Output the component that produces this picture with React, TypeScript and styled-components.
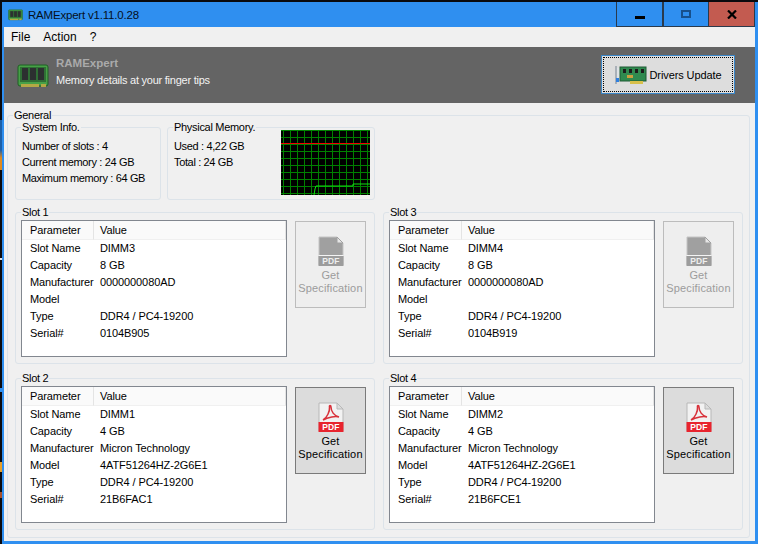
import React, { FC } from 'react';
import styled, { createGlobalStyle } from 'styled-components';

const GlobalStyle = createGlobalStyle`
  html, body {
    margin: 0;
    padding: 0;
    width: 758px;
    height: 544px;
    overflow: hidden;
    background: #0a0a0e;
  }
  * { box-sizing: border-box; }
`;

const uiFont = `'Liberation Sans', Arial, sans-serif`;

const Screen = styled.div`
  display: flex;
  width: 758px;
  height: 544px;
  padding-top: 2px;
  background: #0a0a0e;
`;

const DesktopEdge = styled.div`
  width: 2px;
  margin-top: -2px;
  flex: none;
  background: linear-gradient(
    to bottom,
    #0a0a0e 0 120px,
    #1c5fa8 120px 150px,
    #e08a1e 158px 170px,
    #0a0a0e 170px 258px,
    #e6e6e6 258px 260px,
    #0a0a0e 260px 388px,
    #2f8ff0 388px 392px,
    #0a0a0e 392px 462px,
    #e9a028 462px 472px,
    #0a0a0e 472px 492px,
    #a8502a 492px 498px,
    #0a0a0e 498px
  );
`;

const Window = styled.div`
  display: flex;
  flex-direction: column;
  width: 756px;
  height: 542px;
  border-left: 2px solid #2f8ff0;
  border-right: 3px solid #2f8ff0;
  border-bottom: 3px solid #2f8ff0;
  background: #f0f0f0;
  font-family: ${uiFont};
  font-size: 11px;
  color: #000;
`;

const TitleBar = styled.div`
  display: flex;
  align-items: center;
  height: 25px;
  flex: none;
  background: #2f8ff0;
`;

const TitleIcon = styled.svg`
  width: 15px;
  height: 12px;
  margin: 0 5px 0 4px;
  flex: none;
`;

const TitleText = styled.div`
  flex: 1;
  font-size: 11.5px;
  letter-spacing: -0.2px;
  color: #05101c;
`;

const TitleButton = styled.div<{ $close?: boolean; $width: number }>`
  display: flex;
  align-items: center;
  justify-content: center;
  width: ${(p) => p.$width}px;
  height: 25px;
  border: 1px solid #2a3a4c;
  border-top: 0;
  border-left-width: ${(p) => (p.$close ? 0 : 1)}px;
  background: ${(p) => (p.$close ? '#c35b50' : '#2f8ff0')};
`;

const MinGlyph = styled.div`
  width: 10px;
  height: 3px;
  margin-top: 6px;
  background: #000;
`;

const MaxGlyph = styled.div`
  width: 10px;
  height: 8px;
  border: 2px solid #17508c;
`;

const MenuBar = styled.div`
  display: flex;
  align-items: center;
  gap: 13px;
  height: 20px;
  padding-left: 7px;
  flex: none;
  background: #f0f0f0;
  font-size: 12px;
`;

const Banner = styled.div`
  display: flex;
  align-items: center;
  height: 56px;
  padding: 0 20px 0 13px;
  flex: none;
  background: #646464;
`;

const BannerIcon = styled.svg`
  width: 32px;
  height: 24px;
  margin-right: 7px;
  margin-top: 1px;
  flex: none;
`;

const BannerText = styled.div`
  flex: 1;
  display: flex;
  flex-direction: column;
  gap: 3px;
  padding-bottom: 8px;
  line-height: 14px;
`;

const BannerName = styled.div`
  font-weight: 700;
  font-size: 11.5px;
  color: #aaaaaa;
`;

const BannerTagline = styled.div`
  letter-spacing: -0.24px;
  color: #f2f2f2;
`;

const UpdateButton = styled.button`
  display: flex;
  align-items: center;
  justify-content: center;
  gap: 3px;
  width: 134px;
  height: 39px;
  margin-top: -1px;
  padding: 0;
  border: 1px solid #3a86c8;
  outline: 1px dotted #000;
  outline-offset: -3px;
  background: #dddddd;
  font-family: ${uiFont};
  font-size: 11px;
  letter-spacing: -0.1px;
  color: #000;
`;

const CardIcon = styled.svg`
  width: 32px;
  height: 20px;
  flex: none;
`;

const Body = styled.div`
  flex: 1;
  padding: 5px 5px 0 3px;
`;

const Group = styled.fieldset<{ $width?: number; $height?: number }>`
  margin: 0;
  padding: 0;
  min-width: 0;
  width: ${(p) => (p.$width ? `${p.$width}px` : 'auto')};
  height: ${(p) => (p.$height ? `${p.$height}px` : 'auto')};
  border: 1px solid #dce3e9;
  border-radius: 3px;
`;

const GroupLabel = styled.legend`
  margin-left: 5px;
  padding: 0 1px;
  height: 14px;
  line-height: 14px;
  font-size: 11px;
  letter-spacing: -0.3px;
`;

const GeneralInner = styled.div`
  padding-left: 7px;
`;

const TopRow = styled.div`
  display: flex;
  gap: 6px;
  margin-top: -2px;
`;

const InfoColumn = styled.div`
  display: flex;
  flex-direction: column;
  padding: 4px 0 0 6px;
  line-height: 16px;
  letter-spacing: -0.35px;
  white-space: nowrap;
`;

const MemoryBody = styled.div`
  display: flex;
  justify-content: space-between;
  padding-right: 4px;
`;

const Chart = styled.svg`
  width: 89px;
  height: 65px;
  margin-top: -4px;
  flex: none;
`;

const SlotGrid = styled.div`
  display: grid;
  grid-template-columns: 360px 360px;
  column-gap: 8px;
  row-gap: 7px;
  margin-top: 5px;
`;

const SlotBody = styled.div`
  display: flex;
  align-items: flex-start;
  gap: 8px;
  padding: 1px 0 0 5px;
`;

const TableFrame = styled.div`
  width: 266px;
  height: 137px;
  border: 1px solid #82878f;
  background: #fff;
`;

const ParamTable = styled.table`
  width: 264px;
  border-collapse: separate;
  border-spacing: 0;
  table-layout: fixed;
  letter-spacing: -0.1px;
`;

const HeadCell = styled.th<{ $width: number; $inset: number }>`
  width: ${(p) => p.$width}px;
  height: 19px;
  padding: 0 0 0 ${(p) => p.$inset}px;
  background: #fafafa;
  border-right: 1px solid #e4e4e4;
  border-bottom: 1px solid #f0f0f0;
  font-weight: 400;
  text-align: left;
  line-height: 17px;
`;

const Cell = styled.td<{ $inset: number }>`
  height: 17px;
  padding: 0 0 0 ${(p) => p.$inset}px;
  white-space: nowrap;
  line-height: 17px;
`;

const SpecButton = styled.button<{ $enabled: boolean }>`
  display: flex;
  flex-direction: column;
  align-items: center;
  width: 71px;
  height: 87px;
  margin-top: 1px;
  padding: 14px 0 0;
  border: 1px solid ${(p) => (p.$enabled ? '#7a7a7a' : '#bcbcbc')};
  background: ${(p) => (p.$enabled ? '#dcdcdc' : '#eeeeee')};
  color: ${(p) => (p.$enabled ? '#000' : '#9c9c9c')};
  font-family: ${uiFont};
  font-size: 11px;
  letter-spacing: 0.15px;
  line-height: 13px;
`;

const PdfIcon = styled.svg`
  width: 26px;
  height: 30px;
  margin-bottom: 3px;
  flex: none;
`;

const RamGlyph: FC = () => (
  <>
    <rect x="1" y="1" width="30" height="21" rx="2" fill="#47a047" stroke="#1f5f24" />
    <rect x="3" y="3" width="26" height="15" fill="#2f6f35" />
    <rect x="5" y="4" width="6" height="12" fill="#2c3030" />
    <rect x="13" y="4" width="6" height="12" fill="#2c3030" />
    <rect x="21" y="4" width="6" height="12" fill="#2c3030" />
    <rect x="4" y="20" width="18" height="3" fill="#b4a844" />
    <rect x="24" y="20" width="5" height="3" fill="#b4a844" />
  </>
);

const PdfGlyph: FC<{ enabled: boolean }> = ({ enabled }) => (
  <PdfIcon viewBox="0 0 26 30">
    {enabled ? (
      <>
        <path d="M1 1 H19 L25 7 V29 H1 Z" fill="#f2f2f2" stroke="#b8b8b8" />
        <path d="M19 1 V7 H25 Z" fill="#dcdcdc" stroke="#b8b8b8" />
        <path
          d="M5 18 C9 16 12 9 11.5 5 C11 3 13 3 13 5 C13 9 16 14 21 15 C18 14 10 15 5 18 Z"
          fill="none"
          stroke="#d8313a"
          strokeWidth="1.5"
        />
        <rect x="0.5" y="20" width="25" height="10" fill="#e8242e" />
        <text x="13" y="28.2" textAnchor="middle" fontSize="8.5" fontWeight="700" fill="#fff" fontFamily="Liberation Sans, sans-serif">
          PDF
        </text>
      </>
    ) : (
      <>
        <path d="M1 1 H19 L25 7 V29 H1 Z" fill="#a0a0a0" stroke="#c4c4c4" />
        <path d="M19 1 V7 H25 Z" fill="#e6e6e6" stroke="#a0a0a0" />
        <rect x="0.5" y="19" width="25" height="1" fill="#f4f4f4" />
        <rect x="0.5" y="20" width="25" height="10" fill="#9c9c9c" />
        <text x="13" y="28.2" textAnchor="middle" fontSize="8.5" fontWeight="700" fill="#eee" fontFamily="Liberation Sans, sans-serif">
          PDF
        </text>
      </>
    )}
  </PdfIcon>
);

type Slot = {
  title: string;
  enabled: boolean;
  rows: [string, string][];
};

const slots: Slot[] = [
  {
    title: 'Slot 1',
    enabled: false,
    rows: [
      ['Slot Name', 'DIMM3'],
      ['Capacity', '8 GB'],
      ['Manufacturer', '0000000080AD'],
      ['Model', ''],
      ['Type', 'DDR4 / PC4-19200'],
      ['Serial#', '0104B905'],
    ],
  },
  {
    title: 'Slot 3',
    enabled: false,
    rows: [
      ['Slot Name', 'DIMM4'],
      ['Capacity', '8 GB'],
      ['Manufacturer', '0000000080AD'],
      ['Model', ''],
      ['Type', 'DDR4 / PC4-19200'],
      ['Serial#', '0104B919'],
    ],
  },
  {
    title: 'Slot 2',
    enabled: true,
    rows: [
      ['Slot Name', 'DIMM1'],
      ['Capacity', '4 GB'],
      ['Manufacturer', 'Micron Technology'],
      ['Model', '4ATF51264HZ-2G6E1'],
      ['Type', 'DDR4 / PC4-19200'],
      ['Serial#', '21B6FAC1'],
    ],
  },
  {
    title: 'Slot 4',
    enabled: true,
    rows: [
      ['Slot Name', 'DIMM2'],
      ['Capacity', '4 GB'],
      ['Manufacturer', 'Micron Technology'],
      ['Model', '4ATF51264HZ-2G6E1'],
      ['Type', 'DDR4 / PC4-19200'],
      ['Serial#', '21B6FCE1'],
    ],
  },
];

const SlotBox: FC<{ slot: Slot }> = ({ slot }) => (
  <Group $height={159}>
    <GroupLabel>{slot.title}</GroupLabel>
    <SlotBody>
      <TableFrame>
        <ParamTable>
          <thead>
            <tr>
              <HeadCell $width={72} $inset={8}>Parameter</HeadCell>
              <HeadCell $width={192} $inset={6}>Value</HeadCell>
            </tr>
          </thead>
          <tbody>
            {slot.rows.map(([name, value]) => (
              <tr key={name}>
                <Cell $inset={8}>{name}</Cell>
                <Cell $inset={6}>{value}</Cell>
              </tr>
            ))}
          </tbody>
        </ParamTable>
      </TableFrame>
      <SpecButton $enabled={slot.enabled}>
        <PdfGlyph enabled={slot.enabled} />
        Get
        <br />
        Specification
      </SpecButton>
    </SlotBody>
  </Group>
);

const gridX = Array.from({ length: 13 }, (_, i) => i * 7 + 2);
const gridY = Array.from({ length: 10 }, (_, i) => i * 7);

const MemoryChart: FC = () => (
  <Chart viewBox="0 0 89 65">
    <rect width="89" height="65" fill="#000" />
    {gridX.map((x) => (
      <line key={x} x1={x + 0.5} x2={x + 0.5} y1="0" y2="65" stroke="#008000" />
    ))}
    {gridY.map((y) => (
      <line key={y} x1="0" x2="89" y1={y + 0.5} y2={y + 0.5} stroke="#008000" />
    ))}
    <line x1="0" x2="89" y1="13.5" y2="13.5" stroke="#f00000" />
    <polyline
      points="33,65 34,59 35,56 72,56 72,54 89,54"
      fill="none"
      stroke="#10e010"
    />
  </Chart>
);

const App: FC = () => (
  <Screen>
    <GlobalStyle />
    <DesktopEdge />
    <Window>
      <TitleBar>
        <TitleIcon viewBox="0 0 32 24">
          <RamGlyph />
        </TitleIcon>
        <TitleText>RAMExpert v1.11.0.28</TitleText>
        <TitleButton $width={47}>
          <MinGlyph />
        </TitleButton>
        <TitleButton $width={46}>
          <MaxGlyph />
        </TitleButton>
        <TitleButton $width={46} $close>
          <svg width="10" height="9" viewBox="0 0 10 9">
            <path d="M1 0.5 L9 8.5 M9 0.5 L1 8.5" stroke="#000" strokeWidth="2.2" />
          </svg>
        </TitleButton>
      </TitleBar>
      <MenuBar>
        <span>File</span>
        <span>Action</span>
        <span>?</span>
      </MenuBar>
      <Banner>
        <BannerIcon viewBox="0 0 32 24">
          <RamGlyph />
        </BannerIcon>
        <BannerText>
          <BannerName>RAMExpert</BannerName>
          <BannerTagline>Memory details at your finger tips</BannerTagline>
        </BannerText>
        <UpdateButton>
          <CardIcon viewBox="0 0 32 20">
            <rect x="0" y="1" width="2" height="18" fill="#a9b0b8" />
            <rect x="2" y="3" width="4" height="12" fill="#dfe3e6" />
            <rect x="1" y="13" width="3" height="4" fill="#2f7fe0" />
            <rect x="5" y="2" width="26" height="14" fill="#2f8a4f" stroke="#1f5a35" />
            <rect x="8" y="4" width="3" height="4" fill="#1c1c1c" />
            <rect x="14" y="4" width="3" height="4" fill="#1c1c1c" />
            <rect x="20" y="4" width="3" height="4" fill="#1c1c1c" />
            <rect x="26" y="4" width="3" height="4" fill="#1c1c1c" />
            <rect x="12" y="10" width="6" height="3" fill="#c9a040" />
            <rect x="15" y="16" width="13" height="3" fill="#d8c04a" />
          </CardIcon>
          Drivers Update
        </UpdateButton>
      </Banner>
      <Body>
        <Group $height={430}>
          <GroupLabel>General</GroupLabel>
          <GeneralInner>
            <TopRow>
              <Group $width={146} $height={80}>
                <GroupLabel>System Info.</GroupLabel>
                <InfoColumn>
                  <span>Number of slots : 4</span>
                  <span>Current memory : 24 GB</span>
                  <span>Maximum memory : 64 GB</span>
                </InfoColumn>
              </Group>
              <Group $width={208} $height={80}>
                <GroupLabel>Physical Memory.</GroupLabel>
                <MemoryBody>
                  <InfoColumn>
                    <span>Used : 4,22 GB</span>
                    <span>Total : 24 GB</span>
                  </InfoColumn>
                  <MemoryChart />
                </MemoryBody>
              </Group>
            </TopRow>
            <SlotGrid>
              {slots.map((slot) => (
                <SlotBox key={slot.title} slot={slot} />
              ))}
            </SlotGrid>
          </GeneralInner>
        </Group>
      </Body>
    </Window>
  </Screen>
);

export default App;
